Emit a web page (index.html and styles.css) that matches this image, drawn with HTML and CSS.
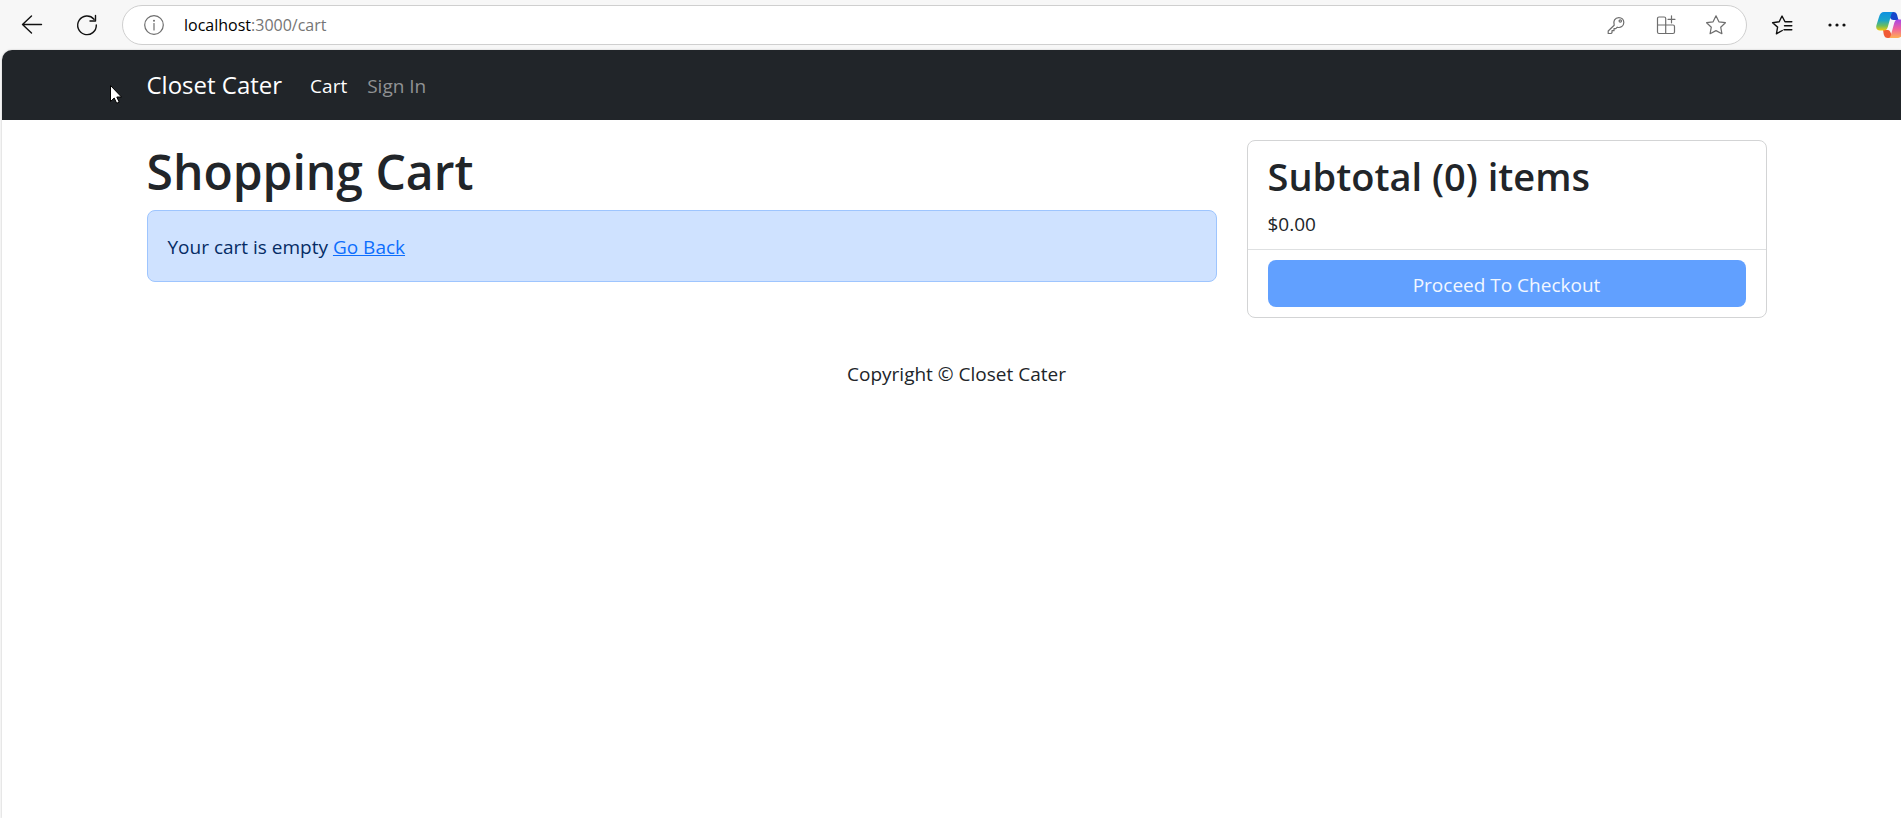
FILE: index.html
```html
<!DOCTYPE html>
<html lang="en">
<head>
<meta charset="utf-8">
<title>Shopping Cart</title>
<link rel="stylesheet" href="styles.css">
</head>
<body>
<div class="toolbar">
  <button class="tool" type="button" aria-label="Back">
    <svg viewBox="0 0 20 20"><path d="M19.500 9.500H.5M9.500 .9 .5 9.500 9.500 18.100"/></svg>
  </button>
  <button class="tool tool-refresh" type="button" aria-label="Refresh">
    <svg viewBox="0 0 20 20"><path d="M17 4.200A9.300 9.300 0 1 0 19.300 10M18.500.500V6H13"/></svg>
  </button>
  <div class="address">
    <button class="tool tool-muted" type="button" aria-label="Site information">
      <svg viewBox="0 0 20 20"><circle cx="10" cy="10" r="9.300"/><path d="M10 8.500V15"/><circle class="solid" cx="10" cy="5.800" r="1"/></svg>
    </button>
    <div class="url" role="textbox" aria-label="Address" contenteditable="true" spellcheck="false"><span class="url-host">localhost</span>:3000/cart</div>
    <div class="address-actions">
      <button class="tool tool-muted" type="button" aria-label="Passwords">
        <svg viewBox="0 0 20 20"><path d="M8.200 10.200C6.800 6 9 2.600 12.800 2.600c3 0 5 2.200 5 4.900 0 3.600-3.200 5.800-6.500 4.700L9.800 13.700H8v2H6v2L5 18.500H2.200V16z"/><circle cx="14.300" cy="6" r="1.200"/></svg>
      </button>
      <button class="tool tool-muted" type="button" aria-label="Apps">
        <svg viewBox="0 0 20 20"><path d="M9.700 18.500H3a1.500 1.500 0 0 1-1.500-1.500V3.500A1.500 1.500 0 0 1 3 2h5.200a1.500 1.500 0 0 1 1.500 1.500V18.500M1.500 10h15.500a1.500 1.500 0 0 1 1.500 1.500V17a1.500 1.500 0 0 1-1.500 1.500H9.700M15.500.800v7M12 4.300h7"/></svg>
      </button>
      <button class="tool tool-muted" type="button" aria-label="Add to favorites">
        <svg viewBox="0 0 20 20"><path d="M10 .800l2.900 6 6.500.9-4.700 4.500 1.200 6.500L10 15.600l-5.900 3.100 1.200-6.500L.6 7.700l6.500-.9z"/></svg>
      </button>
    </div>
  </div>
  <div class="toolbar-end">
    <button class="tool" type="button" aria-label="Favorites">
      <svg viewBox="0 0 20 20"><path d="M19.800 6.800H13L10 1 7.200 6.800.6 7.800l5 4.300-1.200 6.700 5.900-3.300M12.500 10.800h7.300M12 14.700h7.800"/></svg>
    </button>
    <button class="tool" type="button" aria-label="More">
      <svg viewBox="0 0 20 20"><g class="solid"><circle cx="3" cy="10" r="1.600"/><circle cx="10" cy="10" r="1.600"/><circle cx="17" cy="10" r="1.600"/></g></svg>
    </button>
  </div>
  <button class="copilot" type="button" aria-label="Copilot">
    <svg viewBox="0 0 30 26">
      <defs>
        <linearGradient id="cool" x1="0" y1="0" x2="0" y2="1"><stop offset="0" stop-color="#0d91e1"/><stop offset=".45" stop-color="#1ba5c9"/><stop offset=".75" stop-color="#6dbd5c"/><stop offset="1" stop-color="#f3cb0c"/></linearGradient>
        <linearGradient id="warm" x1="0" y1="0" x2="0" y2="1"><stop offset="0" stop-color="#a447ea"/><stop offset=".5" stop-color="#f0619c"/><stop offset="1" stop-color="#ffb152"/></linearGradient>
      </defs>
      <path fill="#1647cc" d="M13 0h4.500c2 0 3 1 3.600 3l1.400 5h-5c-2 0-3-1-4-4z"/>
      <path fill="#f05a35" d="M7 18h5c2 0 3 3 4.500 8H12c-2.500 0-3.500-1-4.200-3.500z"/>
      <path fill="url(#cool)" d="M8 0h10c-2 0-2.500 1.500-3.200 4l-3 11c-.7 2.500-1.800 3.500-4 3.500H4C1 18.500-.5 16.500.5 13L3 5C4 1.500 5.500 0 8 0z"/>
      <path fill="url(#warm)" d="M22 26h-10c2 0 2.500-1.500 3.200-4l3-11c.7-2.500 1.800-3.500 4-3.500H26c3 0 4.500 2 3.500 5.500L27 21c-1 3.500-2.500 5-5 5z"/>
    </svg>
  </button>
</div>

<div class="page">
  <header class="navbar">
    <nav class="container navbar-inner">
      <a class="brand" href="#">Closet Cater</a>
      <a class="nav-link nav-link-active" href="#">Cart</a>
      <a class="nav-link" href="#">Sign In</a>
    </nav>
  </header>
  <div class="content">
    <main class="container main">
      <section class="cart">
        <h1 class="title">Shopping Cart</h1>
        <div class="alert" role="alert">Your cart is empty <a class="alert-link" href="#">Go Back</a></div>
      </section>
      <aside class="card">
        <div class="card-item">
          <h2 class="subtotal">Subtotal (0) items</h2>
          $0.00
        </div>
        <div class="card-item">
          <button class="checkout" type="button" disabled>Proceed To Checkout</button>
        </div>
      </aside>
    </main>
    <footer class="container footer">Copyright © Closet Cater</footer>
  </div>
  <svg class="pointer" viewBox="0 0 12 19" aria-hidden="true"><path d="M.5.500V16.500L4.200 13l2.500 5.300 2.500-1.200L6.800 12H11.500z"/></svg>
</div>
</body>
</html>
```

FILE: styles.css
```css
* { box-sizing: border-box; }

body {
  margin: 0;
  min-height: 100vh;
  display: flex;
  flex-direction: column;
  overflow: hidden;
  background: #f7f7f7;
  color: #212529;
  font: 19px/30px "Segoe UI", "Open Sans", "Noto Sans", sans-serif;
}

button { padding: 0; border: 0; background: none; font: inherit; }

/* Browser toolbar */
.toolbar {
  display: flex;
  align-items: center;
  height: 50px;
  padding: 0 0 1px 22px;
}

.tool {
  flex: none;
  width: 20px;
  height: 20px;
  color: #111;
}

.tool svg {
  display: block;
  fill: none;
  stroke: currentColor;
  stroke-width: 1.4;
  stroke-linecap: round;
  stroke-linejoin: round;
  overflow: visible;
}

.tool .solid { fill: currentColor; stroke: none; }
.tool-refresh { margin-left: 35px; }
.tool-muted { color: #6e6e6e; }
.tool-muted svg { stroke-width: 1.2; }

.address {
  flex: 1;
  display: flex;
  align-items: center;
  gap: 20px;
  height: 40px;
  margin: 0 25px;
  padding: 0 20px 0 21px;
  border: 1px solid #cfcfcf;
  border-radius: 20px;
  background: #fff;
}

.url {
  flex: 1;
  color: #757575;
  font-size: 16px;
  line-height: 24px;
  outline: 0;
}

.url-host { color: #000; }
.address-actions { display: flex; gap: 30px; }
.toolbar-end { display: flex; gap: 35px; }

.copilot {
  flex: none;
  width: 30px;
  height: 26px;
  margin: 0 -5px 0 29px;
}

.copilot svg { display: block; }

/* Page */
.page {
  position: relative;
  flex: 1;
  margin-left: 2px;
  border-radius: 10px 0 0 0;
  background: #fff;
  box-shadow: 0 0 2px #bbb;
}

.container {
  max-width: 1650px;
  margin: 0 auto;
  padding: 0 15px;
}

.navbar {
  padding: 10px 0 10px 10px;
  border-radius: 10px 0 0 0;
  background: #212529;
}

.navbar-inner {
  display: flex;
  align-items: center;
  height: 50px;
}

.brand {
  margin-right: 18px;
  color: #fff;
  font-size: 24px;
  line-height: 38px;
  text-decoration: none;
}

.nav-link {
  padding: 12px 10px 10px;
  color: #909294;
  text-decoration: none;
}

.nav-link-active { color: #fff; }

.content { padding-left: 10px; }

.main {
  display: grid;
  grid-template-columns: 2fr 1fr;
  align-items: start;
  padding: 20px 0;
}

.cart { padding: 0 15px; }

.title,
.subtotal { font-weight: 600; }

.title {
  margin: 0 0 6px;
  font-size: 48px;
  line-height: 64px;
}

.subtotal {
  margin: 0 0 8px;
  font-size: 38px;
  line-height: 50px;
}

.alert {
  padding: 21px 20px 19px;
  border: 1px solid #9ec5fe;
  border-radius: 8px;
  background: #cfe2ff;
  color: #052c65;
}

.alert-link { color: #0d6efd; }

.card {
  margin: 0 15px;
  border: 1px solid #d3d4d5;
  border-radius: 8px;
}

.card-item { padding: 10px 20px; }
.card-item + .card-item { border-top: 1px solid #dee0e1; }

.checkout {
  display: block;
  width: 100%;
  height: 47px;
  padding-top: 2px;
  border-radius: 8px;
  background: #61a0ff;
  color: #f2f7ff;
}

.footer {
  padding-top: 21px;
  padding-bottom: 20px;
  text-align: center;
}

.pointer {
  position: absolute;
  top: 35px;
  left: 108px;
  width: 12px;
  height: 19px;
  fill: #fff;
  stroke: #000;
}
```
